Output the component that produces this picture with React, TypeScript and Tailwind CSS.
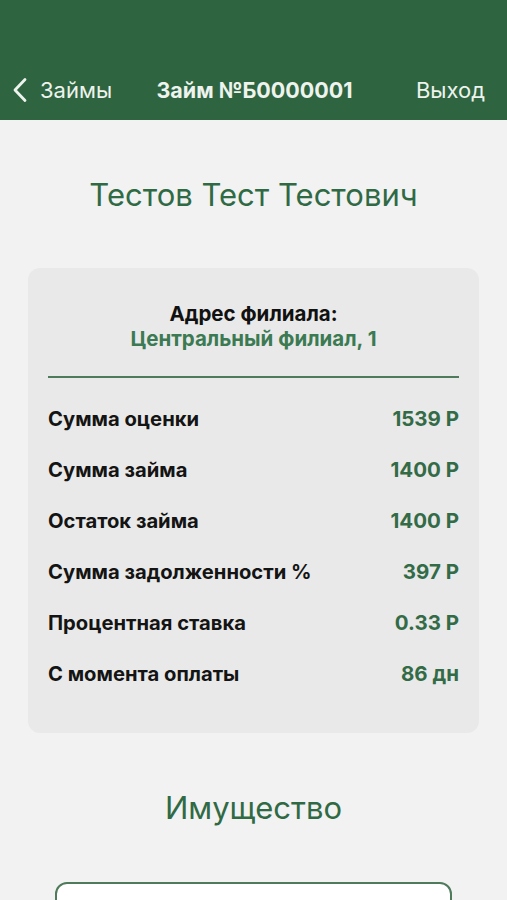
const ROWS = [
  { label: 'Сумма оценки', value: '1539 Р' },
  { label: 'Сумма займа', value: '1400 Р' },
  { label: 'Остаток займа', value: '1400 Р' },
  { label: 'Сумма задолженности %', value: '397 Р' },
  { label: 'Процентная ставка', value: '0.33 Р' },
  { label: 'С момента оплаты', value: '86 дн' },
]

function BackChevron() {
  return (
    <svg width="16" height="26" viewBox="0 0 16 26" fill="none">
      <polyline points="13,2.5 3,13 13,23.5" stroke="currentColor" strokeWidth="2.8" strokeLinecap="round" strokeLinejoin="round" />
    </svg>
  )
}

export default function App() {
  return (
    <div className="w-[507px] h-[900px] overflow-hidden bg-[#f2f2f2] font-['Inter',sans-serif]">
      {/* Header */}
      <header className="h-[120px] bg-[#2e6540] flex items-end pb-[16px]">
        <div className="flex items-center w-full h-[28px] pl-[12px] pr-[22px] text-[#eef3ee]">
          <div className="flex items-center gap-[12px] w-[130px]">
            <BackChevron />
            <span className="text-[22px]">Займы</span>
          </div>
          <span className="flex-1 text-center text-[21.5px] font-bold pr-[18px]">Займ №Б0000001</span>
          <span className="w-[100px] text-right text-[22px]">Выход</span>
        </div>
      </header>

      <h1 className="text-center text-[31px] text-[#2f6a45] mt-[56px] leading-[38px]">
        Тестов Тест Тестович
      </h1>

      {/* Card */}
      <div className="mx-[28px] mt-[54px] h-[465px] rounded-[12px] bg-[#e9e9e9] px-[20px] pt-[33px]">
        <div className="text-center leading-[25px]">
          <p className="text-[20.5px] font-bold text-[#111]">Адрес филиала:</p>
          <p className="text-[20.5px] font-bold text-[#3b7a52]">Центральный филиал, 1</p>
        </div>
        <div className="mt-[25px] border-t-2 border-[#4f7a5c]" />
        <div className="mt-[15px] flex flex-col">
          {ROWS.map((r) => (
            <div key={r.label} className="flex justify-between items-center h-[51px] font-bold leading-[24px]">
              <span className="text-[20.2px] text-[#141414]">{r.label}</span>
              <span className="text-[20.5px] text-[#336b47]">{r.value}</span>
            </div>
          ))}
        </div>
      </div>

      <h2 className="text-center text-[31px] text-[#2f6a45] mt-[56px] leading-[38px]">Имущество</h2>

      <div className="mx-[55px] mt-[55px] h-[80px] rounded-[12px] border-2 border-[#4f7a5c] bg-white" />
    </div>
  )
}
